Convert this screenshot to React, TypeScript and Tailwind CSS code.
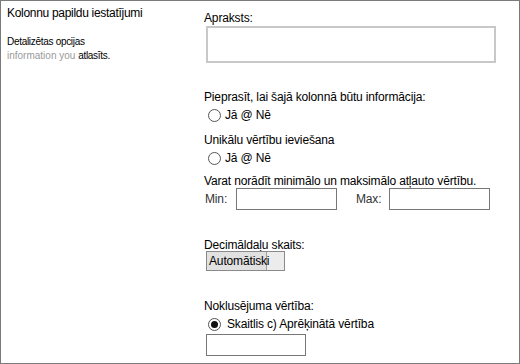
const font = { fontFamily: '"Liberation Sans", Arial, sans-serif' }

function Radio({ checked = false }: { checked?: boolean }) {
  return (
    <span className="flex h-[13px] w-[13px] items-center justify-center rounded-full border border-[#555] bg-white">
      {checked && <span className="h-[7px] w-[7px] rounded-full bg-[#111]" />}
    </span>
  )
}

export default function App() {
  return (
    <div
      className="flex h-[364px] w-[520px] border border-[#7a7a7a] bg-white text-[12px] tracking-[-0.15px] text-black"
      style={font}
    >
      <div className="w-[203px] shrink-0 pl-[6px] pt-[4px]">
        <p className="text-[12px] leading-[16px] tracking-[-0.3px]">Kolonnu papildu iestatījumi</p>
        <p className="mt-[14px] text-[10px] leading-[14px] tracking-[-0.3px]">Detalizētas opcijas</p>
        <p className="text-[10px] leading-[14px] tracking-[-0.3px]">
          <span className="text-[#9a9a9a] tracking-[0px]">information you </span>atlasīts.
        </p>
      </div>

      <div className="flex flex-col pt-[9px]">
        <p className="leading-[16px]">Apraksts:</p>
        <div className="ml-[2px] h-[37px] w-[290px] border-2 border-[#c8c8c8]" />

        <p className="mt-[26px] leading-[16px]">Pieprasīt, lai šajā kolonnā būtu informācija:</p>
        <div className="ml-[4px] mt-[2px] flex items-center gap-[4px] leading-[16px]">
          <Radio />
          <span>Jā @ Nē</span>
        </div>

        <p className="mt-[9px] leading-[16px]">Unikālu vērtību ieviešana</p>
        <div className="ml-[4px] mt-[2px] flex items-center gap-[4px] leading-[16px]">
          <Radio />
          <span>Jā @ Nē</span>
        </div>

        <p className="mt-[7px] leading-[16px]">Varat norādīt minimālo un maksimālo atļauto vērtību.</p>
        <div className="-mt-[1px] flex items-center leading-[16px] text-[#333]">
          <span className="ml-[1px] w-[31px]">Min:</span>
          <div className="h-[22px] w-[101px] border border-[#777]" />
          <span className="ml-[19px] w-[33px]">Max:</span>
          <div className="h-[22px] w-[101px] border border-[#777]" />
        </div>

        <p className="mt-[27px] leading-[16px]">Decimāldaļu skaits:</p>
        <div className="relative -mt-[2px] ml-[2px] h-[20px] w-[79px] border border-[#8a8a8a] bg-[#e1e1e1]">
          <span className="absolute right-0 top-0 h-[18px] w-[18px] border-l border-[#a0a0a0] bg-[#ececec]" />
          <span className="relative pl-[2px] leading-[18px]">Automātiski</span>
        </div>

        <p className="mt-[27px] leading-[16px]">Noklusējuma vērtība:</p>
        <div className="ml-[4px] mt-[2px] flex items-center gap-[6px] leading-[16px]">
          <Radio checked />
          <span>Skaitlis c) Aprēķinātā vērtība</span>
        </div>
        <div className="ml-[2px] mt-[2px] h-[22px] w-[100px] border border-[#777]" />
      </div>
    </div>
  )
}
